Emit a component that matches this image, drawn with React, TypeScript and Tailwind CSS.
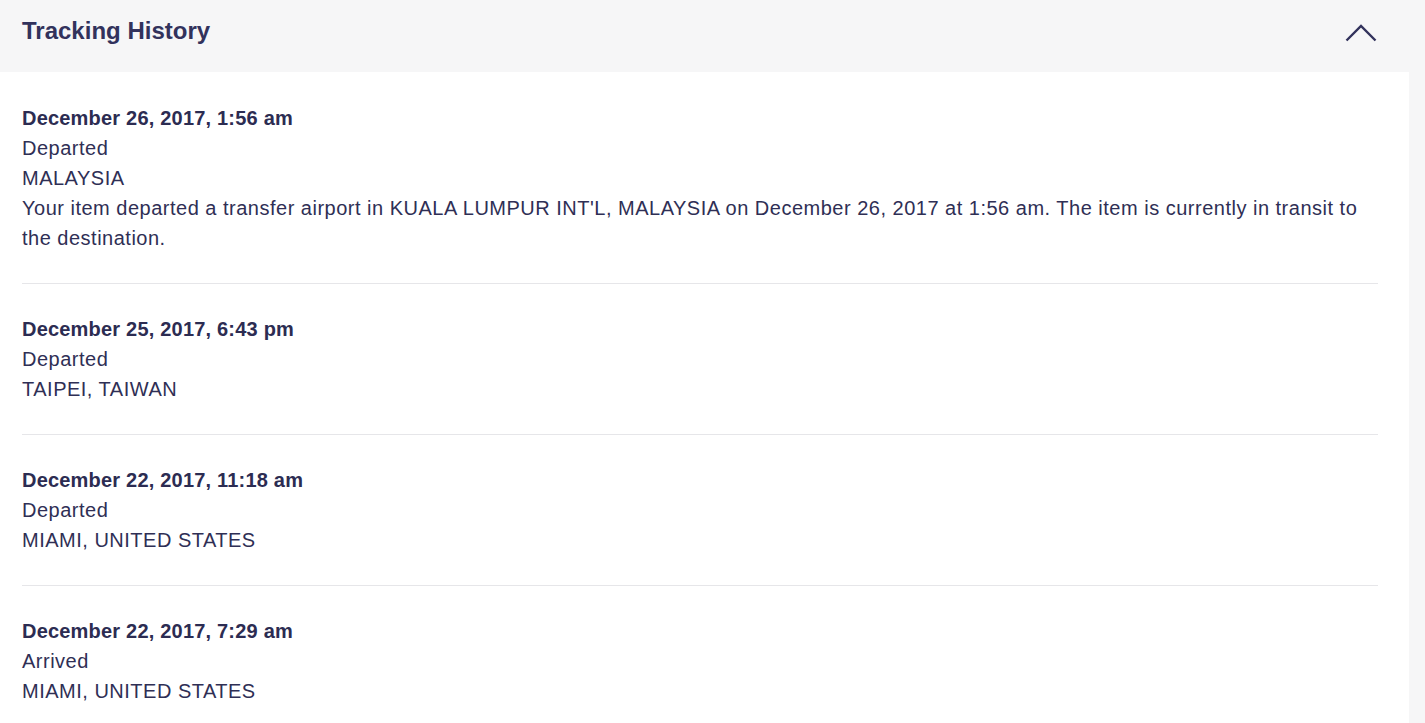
import React from 'react';

interface TrackingEvent {
  date: string;
  status: string;
  location: string;
  detail?: string;
}

const events: TrackingEvent[] = [
  {
    date: 'December 26, 2017, 1:56 am',
    status: 'Departed',
    location: 'MALAYSIA',
    detail:
      "Your item departed a transfer airport in KUALA LUMPUR INT'L, MALAYSIA on December 26, 2017 at 1:56 am. The item is currently in transit to the destination.",
  },
  { date: 'December 25, 2017, 6:43 pm', status: 'Departed', location: 'TAIPEI, TAIWAN' },
  { date: 'December 22, 2017, 11:18 am', status: 'Departed', location: 'MIAMI, UNITED STATES' },
  { date: 'December 22, 2017, 7:29 am', status: 'Arrived', location: 'MIAMI, UNITED STATES' },
];

const App: React.FC = () => {
  return (
    <div
      className="min-h-screen bg-[#f6f6f7] text-[#2f2f55] pr-4"
      style={{ fontFamily: '"Liberation Sans", Arial, sans-serif' }}
    >
      <div className="h-[72px] flex items-center justify-between pl-[22px] pr-[32px]">
        <h2 className="text-[24px] font-bold text-[#32325c] -mt-[10px]">Tracking History</h2>
        <svg width="32" height="18" viewBox="0 0 32 18" className="-mt-[6px]" fill="none">
          <polyline points="1.5,16.5 16,2 30.5,16.5" stroke="#32325c" strokeWidth="2.4" />
        </svg>
      </div>
      <div className="bg-white pl-[22px] pr-[31px] pt-px">
        {events.map((ev, i) => (
          <div
            key={i}
            className={`pt-[30px] pb-[30px] text-[20px] leading-[30px] tracking-[0.5px] ${i < events.length - 1 ? 'border-b border-[#e6e6e9]' : ''}`}
          >
            <p className="font-semibold tracking-[0.2px] text-[#2c2c52]">{ev.date}</p>
            <p>{ev.status}</p>
            <p>{ev.location}</p>
            {ev.detail && <p>{ev.detail}</p>}
          </div>
        ))}
      </div>
    </div>
  );
};

export default App;
